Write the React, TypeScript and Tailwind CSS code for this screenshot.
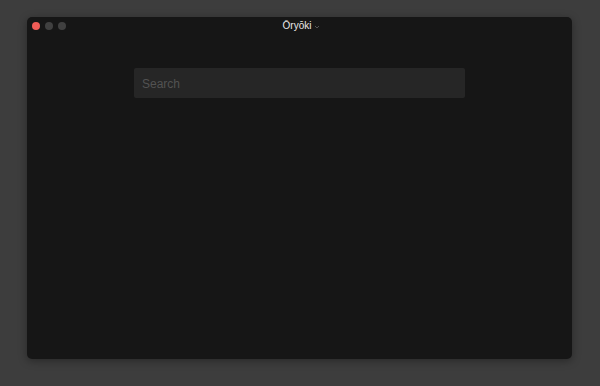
import React from 'react';

const App: React.FC = () => {
  return (
    <div className="w-[600px] h-[386px] bg-[#3d3d3d] pt-[17px] pl-[27px]" style={{ fontFamily: '"Liberation Sans", Arial, sans-serif' }}>
      <div className="w-[545px] h-[342px] bg-[#161616] rounded-[5px] shadow-[0_2px_8px_rgba(0,0,0,0.35)] flex flex-col">
        {/* title bar */}
        <div className="h-[17px] flex items-center relative">
          <div className="flex items-center gap-[5px] pl-[5px]">
            <span className="w-[8px] h-[8px] rounded-full bg-[#f05c57]" />
            <span className="w-[8px] h-[8px] rounded-full bg-[#404040]" />
            <span className="w-[8px] h-[8px] rounded-full bg-[#404040]" />
          </div>
          <div className="absolute left-0 right-0 top-[3px] flex justify-center items-center gap-[3px] pl-[4px]">
            <span className="text-[10px] leading-[12px] text-[#e8e8e8]">Ōryōki</span>
            <svg width="6" height="6" viewBox="0 0 6 6" className="mt-[2px]">
              <path d="M1 2 L3 4 L5 2" stroke="#666" strokeWidth="0.8" fill="none" />
            </svg>
          </div>
        </div>
        {/* search */}
        <div className="pt-[34px] pl-[107px]">
          <div className="w-[331px] h-[30px] bg-[#262626] rounded-[2px] flex items-center pl-[8px]">
            <span className="text-[12px] text-[#525252] mt-[1px]">Search</span>
          </div>
        </div>
      </div>
    </div>
  );
};

export default App;
